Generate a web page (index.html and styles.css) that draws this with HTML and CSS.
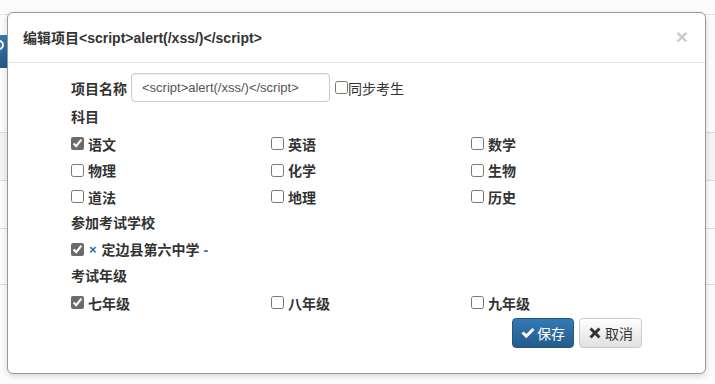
FILE: index.html
```html
<!DOCTYPE html>
<html lang="zh-CN">
<head>
    <meta charset="UTF-8">
    <meta name="viewport" content="width=device-width, initial-scale=1.0">
    <title>编辑项目</title>
    <link rel="stylesheet" href="styles.css">
</head>
<body>
    <div class="page">
        <div class="topbar"></div>
        <div class="toolbar">
            <span class="btn-search">
                <svg width="14" height="14" viewBox="0 0 14 14"><circle cx="5" cy="5" r="4" fill="none" stroke="#fff" stroke-width="2"/></svg>
            </span>
        </div>
        <div class="table">
            <div class="table-row striped"></div>
            <div class="table-row"></div>
            <div class="table-row tall"></div>
        </div>
    </div>

    <div class="modal">
        <div class="modal-header">
            <span class="close">&times;</span>
            <h4 class="modal-title">编辑项目&lt;script&gt;alert(/xss/)&lt;/script&gt;</h4>
        </div>
        <form class="modal-body" id="formProjeto">
            <div class="name-row">
                <label for="nome" class="bold">项目名称</label>
                <input type="text" id="nome" value="<script>alert(/xss/)</script>">
                <label class="sync"><input type="checkbox">同步考生</label>
            </div>

            <div class="line bold">科目</div>
            <div class="grid">
                <label class="check"><input type="checkbox" checked>语文</label>
                <label class="check"><input type="checkbox">英语</label>
                <label class="check"><input type="checkbox">数学</label>
            </div>
            <div class="grid">
                <label class="check"><input type="checkbox">物理</label>
                <label class="check"><input type="checkbox">化学</label>
                <label class="check"><input type="checkbox">生物</label>
            </div>
            <div class="grid">
                <label class="check"><input type="checkbox">道法</label>
                <label class="check"><input type="checkbox">地理</label>
                <label class="check"><input type="checkbox">历史</label>
            </div>

            <div class="line bold">参加考试学校</div>
            <div class="line">
                <label class="check"><input type="checkbox" checked><span class="link x">&times;</span>定边县第六中学<span class="link dash">-</span></label>
            </div>

            <div class="line bold">考试年级</div>
            <div class="grid">
                <label class="check"><input type="checkbox" checked>七年级</label>
                <label class="check"><input type="checkbox">八年级</label>
                <label class="check"><input type="checkbox">九年级</label>
            </div>

            <div class="actions">
                <button type="submit" class="btn btn-primary">
                    <svg width="14" height="14" viewBox="0 0 14 14"><path d="M0.5 7.5 L2.6 5.4 L5.3 8.1 L11.4 2 L13.5 4.1 L5.3 12.3 Z" fill="#fff"/></svg>保存
                </button>
                <button type="button" class="btn btn-default">
                    <svg width="12" height="12" viewBox="0 0 12 12"><path d="M0.5 2.6 L2.6 0.5 L6 3.9 L9.4 0.5 L11.5 2.6 L8.1 6 L11.5 9.4 L9.4 11.5 L6 8.1 L2.6 11.5 L0.5 9.4 L3.9 6 Z" fill="#333"/></svg>取消
                </button>
            </div>
        </form>
    </div>
</body>
</html>
```

FILE: styles.css
```css
* {
    box-sizing: border-box;
}
body {
    margin: 0;
    font-family: "Liberation Sans", "Noto Sans CJK SC", sans-serif;
    font-size: 14px;
    color: #333;
    background-color: #fcfcfc;
}
.page {
    height: 384px;
}
.topbar {
    height: 15px;
    border-bottom: 1px solid #e4e4e4;
}
.toolbar {
    padding-top: 20px;
    height: 117px;
}
.btn-search {
    display: block;
    width: 40px;
    height: 33px;
    margin-left: -6px;
    padding: 5px 0 0 0;
    background: linear-gradient(#3a78b0, #23588a);
    border-radius: 4px;
}
.table {
    border-top: 1px solid #dcdcdc;
}
.table-row {
    height: 48px;
    border-bottom: 1px solid #dcdcdc;
}
.table-row.striped {
    background-color: #f4f4f4;
}
.table-row.tall {
    height: 56px;
}

.modal {
    position: absolute;
    left: 7px;
    top: 12px;
    width: 699px;
    height: 362px;
    background: white;
    border: 1px solid #999;
    border-radius: 6px;
    box-shadow: 0 2px 6px rgba(0, 0, 0, 0.15);
}
.modal-header {
    height: 50px;
    padding: 15px;
    border-bottom: 1px solid #e5e5e5;
}
.modal-title {
    margin: 0;
    font-size: 14px;
    line-height: 20px;
    font-weight: bold;
}
.close {
    float: right;
    font-size: 21px;
    font-weight: bold;
    line-height: 18px;
    color: #000;
    opacity: 0.2;
    margin-right: 2px;
}
.modal-body {
    padding: 10px 34px 0 63px;
}
.bold {
    font-weight: bold;
}
.name-row {
    display: flex;
    align-items: center;
    height: 29px;
    margin-bottom: 5px;
}
.name-row input[type="text"] {
    width: 199px;
    height: 29px;
    margin-left: 4px;
    padding: 4px 10px;
    border: 1px solid #ccc;
    border-radius: 4px;
    font-family: "Liberation Sans", sans-serif;
    font-size: 13px;
    color: #555;
    box-shadow: inset 0 1px 1px rgba(0, 0, 0, 0.075);
}
.sync {
    display: flex;
    align-items: center;
    margin-left: 5px;
}
.sync input {
    margin: 0;
    width: 13px;
    height: 13px;
}
.line {
    height: 20px;
    line-height: 20px;
    margin-bottom: 6.5px;
}
.grid {
    display: grid;
    grid-template-columns: 200px 200px 200px;
    height: 20px;
    margin-bottom: 6.5px;
}
.check {
    display: flex;
    align-items: center;
    height: 20px;
    font-weight: bold;
    white-space: nowrap;
}
.check input {
    margin: 0 4px 0 0;
    width: 13px;
    height: 13px;
    accent-color: #6b6b6b;
}
.link {
    color: #2f6ea8;
    font-family: "Liberation Sans", sans-serif;
    font-weight: bold;
}
.x {
    font-size: 13px;
    margin: 0 5px 0 1px;
}
.dash {
    margin-left: 4px;
}
.actions {
    display: flex;
    justify-content: flex-end;
    gap: 5px;
    padding-right: 29px;
    margin-top: -1px;
}
.btn {
    display: flex;
    align-items: center;
    height: 30px;
    padding: 0 8px;
    font-family: "Liberation Sans", "Noto Sans CJK SC", sans-serif;
    font-size: 14px;
    border-radius: 4px;
    cursor: pointer;
}
.btn svg {
    margin-right: 2px;
}
.btn-primary {
    color: white;
    background: linear-gradient(#337ab7, #265a88);
    border: 1px solid #245580;
}
.btn-default {
    color: #333;
    background: linear-gradient(#fff, #e0e0e0);
    border: 1px solid #ccc;
    padding: 0 8px 0 9px;
}
.btn-default svg {
    margin-right: 4px;
}
```
